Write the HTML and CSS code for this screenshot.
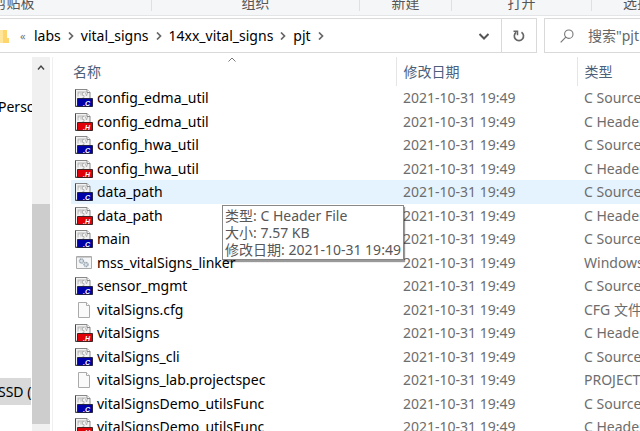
FILE: index.html
```html
<!DOCTYPE html>
<html lang="zh-CN">
<head>
    <meta charset="UTF-8">
    <meta name="viewport" content="width=device-width, initial-scale=1.0">
    <title>pjt</title>
    <link rel="stylesheet" href="styles.css">
</head>
<body>
    <svg class="icon-defs" aria-hidden="true">
        <symbol id="page-code" viewBox="0 0 18 18">
            <path d="M.5 .5h11.500l3 3v13.500H.5z" fill="#f2f2f2" stroke="#888"/>
            <path d="M.5 .5v17h3" fill="none" stroke="#444"/>
            <path d="M12 .5v3h3" fill="#fff" stroke="#888"/>
            <path d="M3 3.500v4M3 4h1.500M6 3.500v3M9 3.500H7.500v3H9v2H7.500M10.500 4l1 3 1-3M2.500 3h9" fill="none" stroke="#b0b0b0" stroke-width=".9"/>
        </symbol>
        <symbol id="file-c" viewBox="0 0 18 18">
            <use href="#page-code"/>
            <path d="M2.500 9.500h15v8h-15z" fill="#0000a8" stroke="#224"/>
            <text x="8" y="16.500" class="tag">.C</text>
        </symbol>
        <symbol id="file-h" viewBox="0 0 18 18">
            <use href="#page-code"/>
            <path d="M2.500 9.500h15v8h-15z" fill="#e00008" stroke="#422"/>
            <text x="8" y="16.500" class="tag">.H</text>
        </symbol>
        <symbol id="file-cmd" viewBox="0 0 18 18">
            <path d="M1.500 2.500h15v12h-15z" fill="#f3f5f7" stroke="#aaa"/>
            <path d="M2 3.500h14" stroke="#ccc"/>
            <circle cx="6.500" cy="7" r="2" fill="#dce3ea" stroke="#9aa6b2" stroke-width="1.400" stroke-dasharray="1.300 .4"/>
            <circle cx="11" cy="10.500" r="2" fill="#dce3ea" stroke="#9aa6b2" stroke-width="1.400" stroke-dasharray="1.300 .4"/>
        </symbol>
        <symbol id="file-blank" viewBox="0 0 18 18">
            <path d="M3.500 1.500h8l3 3v12h-11z" fill="#fafafa" stroke="#aaa"/>
            <path d="M11.500 1.500v3h3" fill="#fff" stroke="#aaa"/>
        </symbol>
        <symbol id="chevron" viewBox="0 0 8 8">
            <path d="M2 .5L5.500 4 2 7.500" fill="none" stroke="#666" stroke-width="1.700"/>
        </symbol>
    </svg>

    <div class="ribbon">
        <div class="group first">剪贴板</div>
        <div class="group organize">组织</div>
        <div class="group new">新建</div>
        <div class="group open">打开</div>
        <div class="group select">选择</div>
    </div>

    <div class="toolbar">
        <nav class="address">
            <svg class="folder" viewBox="0 0 9 14"><path d="M0 1h7v8h2v5H0z" fill="#ffd66e"/><path d="M0 1h3v13H0z" fill="#ffe69b"/></svg>
            <span class="more">«</span>
            <a href="#">labs</a>
            <svg class="sep"><use href="#chevron"/></svg>
            <a href="#">vital_signs</a>
            <svg class="sep"><use href="#chevron"/></svg>
            <a href="#">14xx_vital_signs</a>
            <svg class="sep"><use href="#chevron"/></svg>
            <a href="#">pjt</a>
            <svg class="sep"><use href="#chevron"/></svg>
            <button class="history" aria-label="以前的位置"><svg viewBox="0 0 12 12"><path d="M1.500 4L6 8.500 10.500 4" fill="none" stroke="#555" stroke-width="2"/></svg></button>
            <button class="refresh" aria-label="刷新"><svg viewBox="0 0 12 12"><path d="M8.500 2.200A4.600 4.600 0 1 1 3.200 2.300" fill="none" stroke="#666" stroke-width="1.700"/><path d="M.5 1.300h4v4" fill="none" stroke="#666" stroke-width="1.500"/></svg></button>
        </nav>
        <label class="search">
            <svg viewBox="0 0 14 14"><circle cx="8.800" cy="5.200" r="4.200" fill="none" stroke="#777" stroke-width="1.100"/><path d="M5.800 8.200L.7 13.300" stroke="#777" stroke-width="1.200"/></svg>
            <input type="text" aria-label="搜索" placeholder='搜索"pjt"'>
        </label>
    </div>

    <div class="content">
        <aside class="sidebar">
            <div class="node">Personal</div>
            <div class="node drive">SSD (</div>
        </aside>
        <div class="scrollbar">
            <button aria-label="向上滚动"><svg viewBox="0 0 8 8"><path d="M1 5.500L4 2l3 3.500" fill="none" stroke="#444" stroke-width="1.400"/></svg></button>
            <div class="thumb"></div>
        </div>
        <main class="list">
            <table>
                <colgroup><col class="col-name"><col class="col-date"><col></colgroup>
                <thead>
                    <tr>
                        <th>名称<svg class="sort" viewBox="0 0 8 5"><path d="M.5 4.500L4 1l3.500 3.500" fill="none" stroke="#777"/></svg></th>
                        <th>修改日期</th>
                        <th>类型</th>
                    </tr>
                </thead>
                <tbody>
                    <tr><td><svg><use href="#file-c"/></svg>config_edma_util</td><td>2021-10-31 19:49</td><td>C Source File</td></tr>
                    <tr><td><svg><use href="#file-h"/></svg>config_edma_util</td><td>2021-10-31 19:49</td><td>C Header File</td></tr>
                    <tr><td><svg><use href="#file-c"/></svg>config_hwa_util</td><td>2021-10-31 19:49</td><td>C Source File</td></tr>
                    <tr><td><svg><use href="#file-h"/></svg>config_hwa_util</td><td>2021-10-31 19:49</td><td>C Header File</td></tr>
                    <tr class="hover"><td><svg><use href="#file-c"/></svg>data_path</td><td>2021-10-31 19:49</td><td>C Source File</td></tr>
                    <tr><td><svg><use href="#file-h"/></svg>data_path</td><td>2021-10-31 19:49</td><td>C Header File</td></tr>
                    <tr><td><svg><use href="#file-c"/></svg>main</td><td>2021-10-31 19:49</td><td>C Source File</td></tr>
                    <tr><td><svg><use href="#file-cmd"/></svg>mss_vitalSigns_linker</td><td>2021-10-31 19:49</td><td>Windows 命令脚本</td></tr>
                    <tr><td><svg><use href="#file-c"/></svg>sensor_mgmt</td><td>2021-10-31 19:49</td><td>C Source File</td></tr>
                    <tr><td><svg><use href="#file-blank"/></svg>vitalSigns.cfg</td><td>2021-10-31 19:49</td><td>CFG 文件</td></tr>
                    <tr><td><svg><use href="#file-h"/></svg>vitalSigns</td><td>2021-10-31 19:49</td><td>C Header File</td></tr>
                    <tr><td><svg><use href="#file-c"/></svg>vitalSigns_cli</td><td>2021-10-31 19:49</td><td>C Source File</td></tr>
                    <tr><td><svg><use href="#file-blank"/></svg>vitalSigns_lab.projectspec</td><td>2021-10-31 19:49</td><td>PROJECTSPEC 文件</td></tr>
                    <tr><td><svg><use href="#file-c"/></svg>vitalSignsDemo_utilsFunc</td><td>2021-10-31 19:49</td><td>C Source File</td></tr>
                    <tr><td><svg><use href="#file-h"/></svg>vitalSignsDemo_utilsFunc</td><td>2021-10-31 19:49</td><td>C Header File</td></tr>
                </tbody>
            </table>
            <div class="tooltip" role="tooltip">
                <div>类型: C Header File</div>
                <div>大小: 7.57 KB</div>
                <div>修改日期: 2021-10-31 19:49</div>
            </div>
        </main>
    </div>
</body>
</html>
```

FILE: styles.css
```css
* {
    box-sizing: border-box;
}

body {
    margin: 0;
    height: 100vh;
    display: flex;
    flex-direction: column;
    overflow: hidden;
    background: #fff;
    color: #000;
    font-family: "Noto Sans", "Noto Sans CJK SC", sans-serif;
    font-size: 14px;
    line-height: 20px;
    white-space: nowrap;
}

button {
    padding: 0;
    border: none;
    background: none;
    display: flex;
    align-items: center;
    justify-content: center;
}

.icon-defs {
    position: absolute;
    width: 0;
    height: 0;
}

.tag {
    font-family: "Liberation Sans", sans-serif;
    font-size: 7px;
    font-weight: bold;
    font-style: italic;
    fill: #fff;
}

/* ribbon */
.ribbon {
    display: flex;
    align-items: flex-start;
    flex-shrink: 0;
    height: 16px;
    overflow: hidden;
    background: #f5f6f7;
    border-bottom: 1px solid #e4e5e6;
    color: #555;
}

.group {
    flex-shrink: 0;
    height: 18px;
    margin-top: -7px;
    border-right: 1px solid #dfe0e1;
    text-align: center;
}

.group.first {
    width: 276px;
    margin-left: -124px;
}

.group.organize {
    width: 208px;
}

.group.new {
    width: 92px;
}

.group.open {
    width: 140px;
}

.group.select {
    width: 90px;
    border-right: none;
}

/* address bar and search */
.toolbar {
    display: flex;
    gap: 7px;
    flex-shrink: 0;
    height: 41px;
    padding: 2px 0 4px;
}

.address {
    flex: 1;
    display: flex;
    align-items: center;
    border: 1px solid #d9d9d9;
    border-left: none;
}

.address a {
    color: #000;
    text-decoration: none;
}

.folder {
    width: 9px;
    height: 14px;
    margin-right: 11px;
}

.more {
    width: 14px;
    color: #777;
    font-size: 11px;
}

.sep {
    width: 8px;
    height: 8px;
    margin: 0 6px;
}

.history {
    width: 34px;
    height: 100%;
    margin-left: auto;
}

.refresh {
    width: 35px;
    height: 100%;
    border-left: 1px solid #d9d9d9;
}

.history svg,
.refresh svg {
    width: 12px;
    height: 12px;
}

.search {
    width: 96px;
    display: flex;
    align-items: center;
    gap: 14px;
    padding-left: 15px;
    border: 1px solid #d9d9d9;
    border-right: none;
    overflow: hidden;
}

.search svg {
    flex-shrink: 0;
    width: 14px;
    height: 14px;
}

.search input {
    width: 100px;
    flex-shrink: 0;
    padding: 0;
    border: none;
    outline: none;
    font: inherit;
}

.search input::placeholder {
    color: #666;
    opacity: 1;
}

/* main area */
.content {
    flex: 1;
    display: flex;
    min-height: 0;
}

.sidebar {
    width: 32px;
    padding-top: 36px;
    overflow: hidden;
}

.node {
    height: 27px;
    line-height: 27px;
    text-indent: -2px;
}

.drive {
    margin: 258px 1px 0 0;
    background: #d9d9d9;
}

.scrollbar {
    width: 18px;
    display: flex;
    flex-direction: column;
    background: #f0f0f0;
}

.scrollbar button {
    height: 22px;
}

.scrollbar svg {
    width: 8px;
    height: 8px;
}

.thumb {
    flex: 1;
    margin: 125px 0 7px;
    background: #cdcdcd;
}

.list {
    position: relative;
    flex: 1;
    min-width: 0;
    margin-left: 2px;
    padding-left: 18px;
    border-left: 1px solid #f0f0f0;
    overflow: hidden;
}

table {
    width: 100%;
    table-layout: fixed;
    border-collapse: collapse;
}

.col-name {
    width: 325px;
}

.col-date {
    width: 181px;
}

th {
    position: relative;
    height: 29px;
    padding: 0 0 0 7px;
    border-right: 1px solid #e5e5e5;
    color: #4c607a;
    font-weight: normal;
    text-align: left;
}

th:first-child {
    padding-left: 2px;
}

th:last-child {
    border-right: none;
}

.sort {
    position: absolute;
    top: 0;
    left: 50%;
    width: 8px;
    height: 5px;
    margin-left: -5px;
}

td {
    height: 24px;
    padding: 0 0 0 7px;
    overflow: hidden;
    color: #6d6d6d;
}

tr:nth-child(even) td {
    height: 23px;
}

td:first-child {
    padding-left: 4px;
    color: #000;
}

td svg {
    width: 18px;
    height: 18px;
    margin-right: 4px;
    vertical-align: -4px;
}

.hover {
    background: #e5f3ff;
}

.tooltip {
    position: absolute;
    top: 148px;
    left: 169px;
    padding: 1px 2px;
    border: 1px solid #888;
    background: #fff;
    box-shadow: 1px 2px 1px rgba(0, 0, 0, 0.4);
    color: #575757;
    line-height: 17px;
}
```
